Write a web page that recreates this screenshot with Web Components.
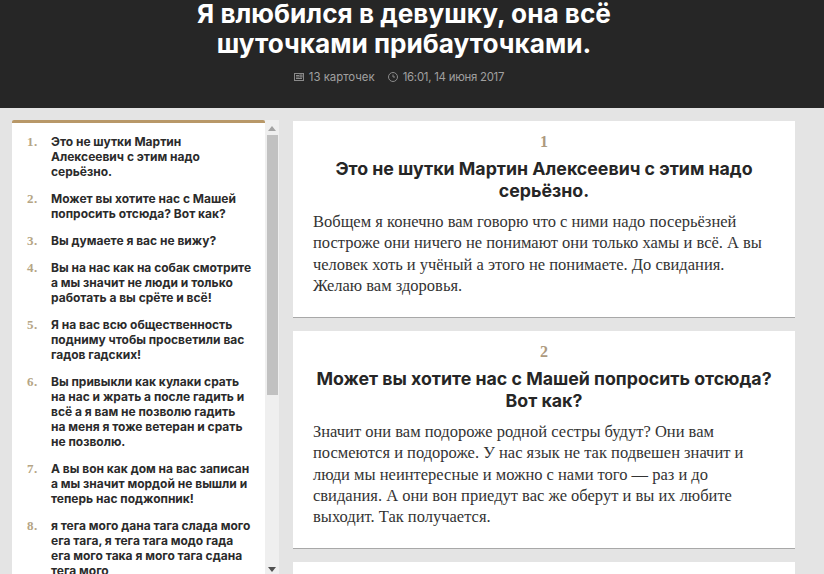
<!DOCTYPE html>
<html lang="ru">
<head>
<meta charset="utf-8">
<title>Я влюбился в девушку</title>
<style>
  html, body { margin: 0; height: 574px; overflow: hidden; background: #e4e4e4; }
  body { font-family: "Inter", "Noto Sans", sans-serif; }
  .page { display: flex; gap: 14px; padding: 12px 0 0 12px; height: 454px; overflow: hidden; }
  .cards { display: flex; flex-direction: column; gap: 13px; width: 502px; padding-top: 1px; }
</style>
</head>
<body>
<story-header cards="13 карточек" date="16:01, 14 июня 2017">Я влюбился в девушку, она всё<br>шуточками прибауточками.</story-header>
<div class="page">
  <toc-panel>
    <toc-item n="1">Это не шутки Мартин Алексеевич с этим надо серьёзно.</toc-item>
    <toc-item n="2">Может вы хотите нас с Машей попросить отсюда? Вот как?</toc-item>
    <toc-item n="3">Вы думаете я вас не вижу?</toc-item>
    <toc-item n="4">Вы на нас как на собак смотрите а мы значит не люди и только работать а вы срёте и всё!</toc-item>
    <toc-item n="5">Я на вас всю общественность подниму чтобы просветили вас гадов гадских!</toc-item>
    <toc-item n="6">Вы привыкли как кулаки срать<br>на нас и жрать а после гадить и<br>всё а я вам не позволю гадить<br>на меня я тоже ветеран и срать<br>не позволю.</toc-item>
    <toc-item n="7">А вы вон как дом на вас записан а мы значит мордой не вышли и теперь нас поджопник!</toc-item>
    <toc-item n="8">я тега мого дана тага слада мого ега тага, я тега тага модо гада ега мого така я мого тага сдана тега мого</toc-item>
  </toc-panel>
  <div class="cards">
    <story-card n="1" heading="Это не шутки Мартин Алексеевич с этим надо серьёзно.">Вобщем я конечно вам говорю что с ними надо посерьёзней построже они ничего не понимают они только хамы и всё. А вы человек хоть и учёный а этого не понимаете. До свидания. Желаю вам здоровья.</story-card>
    <story-card n="2" heading="Может вы хотите нас с Машей попросить отсюда? Вот как?">Значит они вам подороже родной сестры будут? Они вам посмеются и подороже. У нас язык не так подвешен значит и люди мы неинтересные и можно с нами того — раз и до свидания. А они вон приедут вас же оберут и вы их любите выходит. Так получается.</story-card>
    <story-card></story-card>
  </div>
</div>
<script>
class StoryHeader extends HTMLElement {
  constructor() {
    super();
    const shadowRoot = this.attachShadow({mode: 'open'});
    shadowRoot.innerHTML = `
      <style>
        :host { display: block; box-sizing: border-box; height: 108px; padding-right: 16px; background: #262626; color: #fff; text-align: center; overflow: hidden; }
        h1 { margin: -1px 0 0; font-size: 26.2px; line-height: 30px; font-weight: 700; }
        .meta { display: flex; justify-content: center; gap: 13px; margin-top: 10px; margin-left: -10px; font-size: 11.4px; line-height: 16px; color: #a0a0a0; }
        .meta span { display: flex; align-items: center; gap: 5px; }
        .meta b { font-weight: 400; }
        #date { letter-spacing: -.25px; }
        svg { width: 10px; height: 10px; fill: none; stroke: #8a8a8a; stroke-width: 1; }
      </style>
      <h1><slot></slot></h1>
      <div class="meta">
        <span>
          <svg viewBox="0 0 10 10"><rect x=".5" y="1.5" width="9" height="7"/><path d="M2 3.5h3M2 5h3M2 6.5h6"/><rect x="6" y="3" width="2" height="2"/></svg>
          <b id="cards"></b>
        </span>
        <span>
          <svg viewBox="0 0 10 10"><circle cx="5" cy="5" r="4.5"/><path d="M5 2.5V5h2"/></svg>
          <b id="date"></b>
        </span>
      </div>
    `;
  }

  connectedCallback() {
    this.shadowRoot.querySelector('#cards').textContent = this.getAttribute('cards');
    this.shadowRoot.querySelector('#date').textContent = this.getAttribute('date');
  }
}

class TocPanel extends HTMLElement {
  constructor() {
    super();
    const shadowRoot = this.attachShadow({mode: 'open'});
    shadowRoot.innerHTML = `
      <style>
        :host { display: flex; width: 267px; flex: none; height: 454px; }
        .list { width: 253px; box-sizing: border-box; background: #fff; border-top: 3px solid #b89868; padding: 11px 10px 0 15px; overflow: hidden; display: flex; flex-direction: column; gap: 12px; border-radius: 2px 2px 0 0; }
        .bar { width: 14px; background: #efefef; display: flex; flex-direction: column; align-items: center; padding-top: 3px; }
        .up, .down { width: 0; height: 0; border-left: 4px solid transparent; border-right: 4px solid transparent; }
        .up { border-bottom: 5px solid #a3a3a3; margin: 3px 0 4px; }
        .thumb { width: 11px; height: 260px; background: #c1c1c1; }
        .down { border-top: 5px solid #505050; margin-top: auto; margin-bottom: 2px; }
      </style>
      <div class="list"><slot></slot></div>
      <div class="bar"><i class="up"></i><i class="thumb"></i><i class="down"></i></div>
    `;
  }
}

class TocItem extends HTMLElement {
  constructor() {
    super();
    const shadowRoot = this.attachShadow({mode: 'open'});
    shadowRoot.innerHTML = `
      <style>
        :host { display: flex; flex: none; color: #2b2b2b; font-size: 12px; line-height: 15px; font-weight: 700; }
        .n { flex: none; width: 24px; font-family: "Liberation Serif", serif; font-size: 13px; font-weight: 700; letter-spacing: .5px; color: #b5a585; }
      </style>
      <span class="n"></span><span><slot></slot></span>
    `;
  }

  connectedCallback() {
    this.shadowRoot.querySelector('.n').textContent = this.getAttribute('n') + '.';
  }
}

class StoryCard extends HTMLElement {
  constructor() {
    super();
    const shadowRoot = this.attachShadow({mode: 'open'});
    shadowRoot.innerHTML = `
      <style>
        :host { display: block; flex: none; box-sizing: border-box; background: #fff; padding: 11px 20px 21px; border-bottom: 1px solid #a8a8a8; text-align: center; color: #262626; }
        .n { font-family: "Liberation Serif", serif; font-size: 16px; line-height: 20px; font-weight: 700; color: #ad9a7e; }
        h2 { margin: 6px 0 9px; font-size: 17.75px; line-height: 22px; font-weight: 700; }
        p { margin: 0; text-align: left; font-family: "Liberation Serif", serif; font-size: 16.5px; line-height: 21.25px; color: #333; }
      </style>
      <div class="n"></div>
      <h2></h2>
      <p><slot></slot></p>
    `;
  }

  connectedCallback() {
    this.shadowRoot.querySelector('.n').textContent = this.getAttribute('n');
    this.shadowRoot.querySelector('h2').textContent = this.getAttribute('heading');
  }
}

customElements.define('story-header', StoryHeader);
customElements.define('toc-panel', TocPanel);
customElements.define('toc-item', TocItem);
customElements.define('story-card', StoryCard);
</script>
</body>
</html>
